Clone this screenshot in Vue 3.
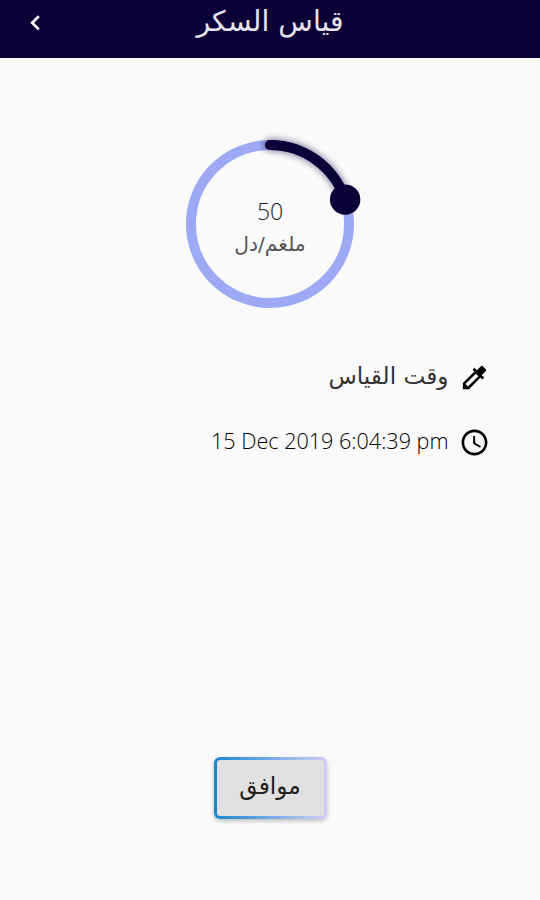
<template>
  <div class="screen" dir="rtl">
    <header class="header">
      <span class="header-side"></span>
      <h1 class="title">قياس السكر</h1>
      <button class="header-side back" type="button" aria-label="رجوع">
        <svg width="12" height="18" viewBox="0 0 12 18">
          <path d="M9.8 2.2 3.2 8.8l6.6 6.6" fill="none" stroke="#fff" stroke-width="2.7" />
        </svg>
      </button>
    </header>

    <main class="content">
      <div class="gauge">
        <svg class="dial" width="200" height="200" viewBox="0 0 200 200">
          <circle cx="100" cy="100" :r="radius" fill="none" stroke="#9ea9f6" stroke-width="10" />
          <path class="glow" :d="arc" />
          <path class="progress" :d="arc" />
          <circle :cx="knob.x" :cy="knob.y" r="15.2" fill="#0c0038" />
        </svg>
        <div class="reading">
          <span class="value">{{ value }}</span>
          <span class="unit">ملغم/دل</span>
        </div>
      </div>

      <div class="details">
        <div class="row">
          <svg class="icon" viewBox="0 0 24 24">
            <path d="M20.71 5.63l-2.34-2.34c-.39-.39-1.02-.39-1.41 0l-3.12 3.12-1.93-1.91-1.41 1.41 1.42 1.42L3 16.25V21h4.75l8.92-8.92 1.42 1.42 1.41-1.41-1.92-1.92 3.12-3.12c.4-.4.4-1.03.01-1.42zM6.92 19L5 17.08l8.06-8.06 1.92 1.92L6.92 19z" />
          </svg>
          <span class="label">وقت القياس</span>
        </div>
        <div class="row">
          <svg class="icon" viewBox="0 0 24 24">
            <path d="M11.99 2C6.47 2 2 6.48 2 12s4.47 10 9.99 10C17.52 22 22 17.52 22 12S17.52 2 11.99 2zM12 20c-4.42 0-8-3.58-8-8s3.58-8 8-8 8 3.58 8 8-3.58 8-8 8z" />
            <path d="M12.5 7H11v6l5.25 3.15.75-1.23-4.5-2.67z" />
          </svg>
          <span class="date" dir="ltr">15 Dec 2019 6:04:39 pm</span>
        </div>
      </div>

      <button class="confirm" type="button">
        <span class="confirm-text">موافق</span>
      </button>
    </main>
  </div>
</template>

<script setup>
import { computed, ref } from 'vue';

const value = ref(50);
const max = 250;
const radius = 79;

const knob = computed(() => {
  const angle = (value.value / max) * 2 * Math.PI;
  return {
    x: 100 + radius * Math.sin(angle),
    y: 100 - radius * Math.cos(angle),
  };
});
const arc = computed(() => `M100 ${100 - radius} A${radius} ${radius} 0 0 1 ${knob.value.x} ${knob.value.y}`);
</script>

<style>
body {
  margin: 0;
  background: #fafafa;
}
</style>

<style scoped>
.screen {
  height: 900px;
  display: flex;
  flex-direction: column;
  overflow: hidden;
  background: #fafafa;
  color: #202020;
  font-family: "DejaVu Sans", sans-serif;
}
.header {
  height: 58px;
  flex: none;
  display: flex;
  background: #0c0038;
}
.header-side {
  width: 70px;
  flex: none;
}
.back {
  display: flex;
  justify-content: center;
  align-items: flex-start;
  padding: 14px 0 0;
  border: 0;
  background: none;
}
.title {
  flex: 1;
  margin: 0;
  text-align: center;
  font-size: 28.3px;
  font-weight: 400;
  line-height: 43px;
  color: #e6e3ea;
}
.content {
  flex: 1;
  display: flex;
  flex-direction: column;
  align-items: center;
}
.gauge {
  width: 200px;
  height: 200px;
  margin-top: 66px;
  display: grid;
}
.dial,
.reading {
  grid-area: 1 / 1;
}
.progress,
.glow {
  fill: none;
  stroke: #0c0038;
  stroke-width: 10;
  stroke-linecap: round;
}
.glow {
  stroke-width: 13;
  opacity: 0.45;
  filter: blur(3px);
}
.reading {
  display: flex;
  flex-direction: column;
  align-items: center;
  padding-top: 71px;
}
.value {
  font-family: "Open Sans", sans-serif;
  font-size: 23px;
  font-weight: 350;
  line-height: 32px;
}
.unit {
  font-size: 20.3px;
  line-height: 34px;
  color: #555;
}
.details {
  align-self: stretch;
  display: flex;
  flex-direction: column;
  gap: 34px;
  margin-top: 38px;
  padding: 0 50.5px;
}
.row {
  height: 31px;
  display: flex;
  align-items: center;
  gap: 10px;
}
.icon {
  width: 31px;
  height: 31px;
  flex: none;
}
.label {
  padding-bottom: 4px;
  font-size: 23.2px;
  line-height: 31px;
  color: #333;
}
.date {
  padding-bottom: 4px;
  font-family: "Open Sans", sans-serif;
  font-size: 21.6px;
  font-weight: 300;
  line-height: 31px;
  white-space: nowrap;
  color: #000;
}
.confirm {
  width: 113px;
  height: 62px;
  margin-top: auto;
  margin-bottom: 81px;
  padding: 3px;
  border: 0;
  border-radius: 6px;
  background: linear-gradient(90deg, #1786d0, #d3cef8);
  box-shadow: 0 2px 4px rgba(0, 0, 0, 0.25);
}
.confirm-text {
  height: 100%;
  box-sizing: border-box;
  display: flex;
  align-items: center;
  justify-content: center;
  padding-bottom: 5px;
  border-radius: 3px;
  background: #e0e0e0;
  color: #202020;
  font-family: "DejaVu Sans", sans-serif;
  font-size: 23.3px;
}
</style>
